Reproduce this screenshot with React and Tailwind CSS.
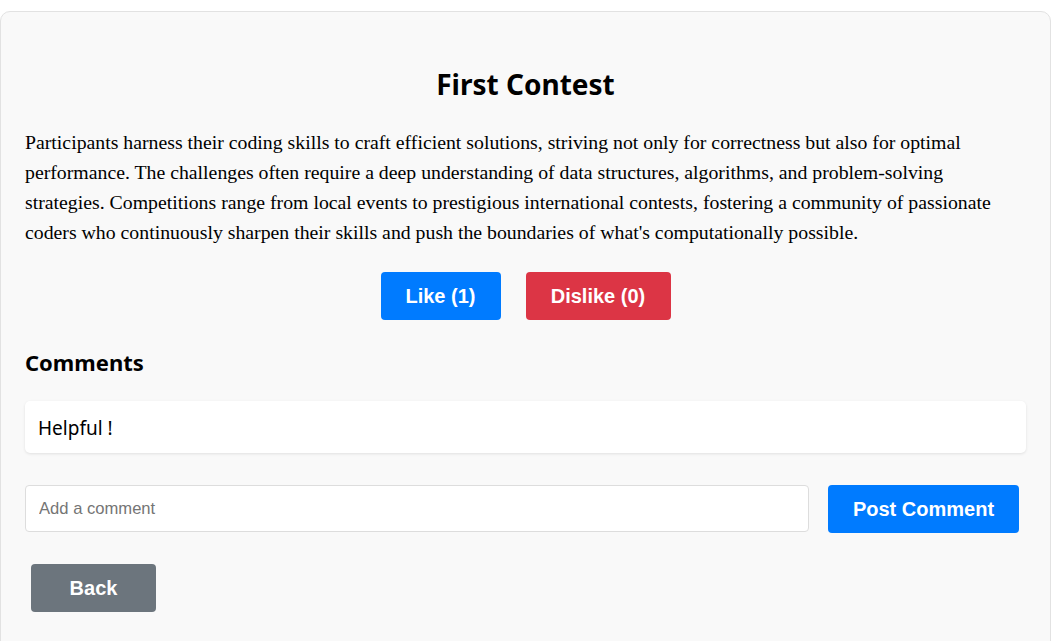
import React, { useState } from 'react';

const App = () => {
  const [likes, setLikes] = useState(1);
  const [dislikes, setDislikes] = useState(0);
  const [comments, setComments] = useState(['Helpful !']);
  const [text, setText] = useState('');

  const postComment = () => {
    if (!text.trim()) return;
    setComments((prev) => [...prev, text.trim()]);
    setText('');
  };

  return (
    <div className="min-h-[641px] bg-white pt-[11px]">
      <div className="w-[1051px] min-h-[630px] rounded-t-[10px] border border-[#e2e2e2] bg-[#f9f9f9] px-[24px] pt-[55px] pb-[30px]">
        <h1
          className="text-center text-[28px] font-bold leading-[34px] text-black"
          style={{ fontFamily: '"Noto Sans", "Open Sans", sans-serif' }}
        >
          First Contest
        </h1>

        <p
          className="mt-[26px] text-[19.8px] leading-[30px] text-black"
          style={{ fontFamily: '"Liberation Serif", serif' }}
        >
          Participants harness their coding skills to craft efficient solutions, striving not only for correctness but also for optimal
          performance. The challenges often require a deep understanding of data structures, algorithms, and problem-solving
          strategies. Competitions range from local events to prestigious international contests, fostering a community of passionate
          coders who continuously sharpen their skills and push the boundaries of what's computationally possible.
        </p>

        {/* Like / Dislike */}
        <div
          className="mt-[25px] flex justify-center gap-[25px]"
          style={{ fontFamily: '"Liberation Sans", Arial, sans-serif' }}
        >
          <button
            onClick={() => setLikes(likes + 1)}
            className="h-[48px] w-[120px] rounded-[4px] bg-[#007bff] text-[20px] font-bold text-white"
          >
            Like ({likes})
          </button>
          <button
            onClick={() => setDislikes(dislikes + 1)}
            className="h-[48px] w-[145px] rounded-[4px] bg-[#dc3545] text-[20px] font-bold text-white"
          >
            Dislike ({dislikes})
          </button>
        </div>

        <h2
          className="mt-[28px] text-[22px] font-bold leading-[28px] text-black"
          style={{ fontFamily: '"Noto Sans", "Open Sans", sans-serif' }}
        >
          Comments
        </h2>

        {/* Comment list */}
        <div className="mt-[25px] flex flex-col gap-[10px]">
          {comments.map((c, i) => (
            <div
              key={i}
              className="flex h-[52px] items-center rounded-[5px] bg-white px-[13px] pt-[3px] text-[19px] text-black shadow-[0_1px_3px_rgba(0,0,0,0.1)]"
              style={{ fontFamily: '"Noto Sans", "Open Sans", sans-serif' }}
            >
              {c}
            </div>
          ))}
        </div>

        {/* Add comment */}
        <div
          className="mt-[32px] flex items-start"
          style={{ fontFamily: '"Liberation Sans", Arial, sans-serif' }}
        >
          <input
            type="text"
            value={text}
            onChange={(e) => setText(e.target.value)}
            placeholder="Add a comment"
            className="h-[47px] w-[784px] rounded-[4px] border border-[#dddddd] bg-white px-[13px] text-[16.6px] text-black placeholder:text-[#757575] outline-none"
          />
          <button
            onClick={postComment}
            className="ml-[19px] h-[48px] w-[191px] rounded-[4px] bg-[#007bff] text-[20px] font-bold text-white"
          >
            Post Comment
          </button>
        </div>

        <button
          className="ml-[6px] mt-[31px] h-[48px] w-[125px] rounded-[4px] bg-[#6c757d] text-[20px] font-bold text-white"
          style={{ fontFamily: '"Liberation Sans", Arial, sans-serif' }}
        >
          Back
        </button>
      </div>
    </div>
  );
};

export default App;
